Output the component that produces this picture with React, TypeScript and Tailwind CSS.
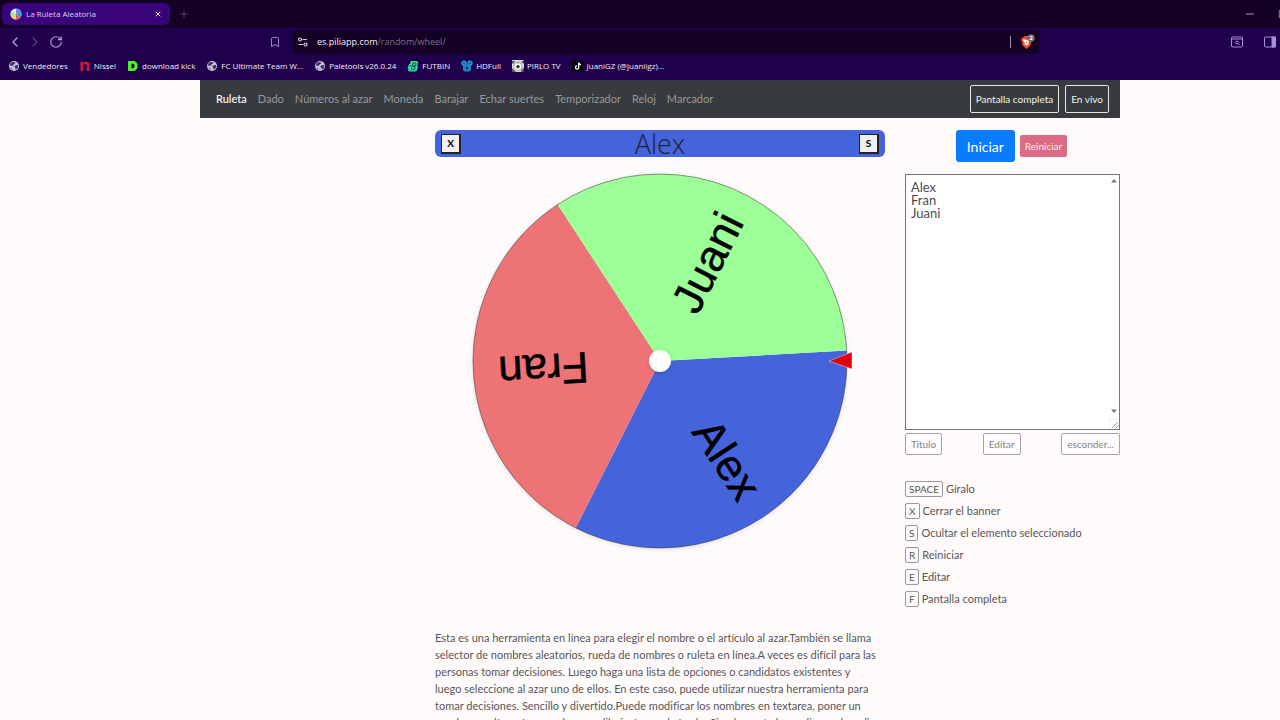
import { useState } from "react";
import { Bookmark, ChevronLeft, ChevronRight, Minus, Plus, RotateCw, Square, X } from "lucide-react";

const NAV = ["Ruleta", "Dado", "Números al azar", "Moneda", "Barajar", "Echar suertes", "Temporizador", "Reloj", "Marcador"];

const SHORTCUTS = [
  ["SPACE", "Gíralo"],
  ["X", "Cerrar el banner"],
  ["S", "Ocultar el elemento seleccionado"],
  ["R", "Reiniciar"],
  ["E", "Editar"],
  ["F", "Pantalla completa"],
];

const COLORS = ["#4564dc", "#ee7376", "#9dff98"];
const START_ANGLE = -3.2;
const RADIUS = 187;

function GlobeIcon() {
  return (
    <svg viewBox="0 0 12 12" className="size-3 shrink-0">
      <circle cx="6" cy="6" r="5" fill="#c9bfdc" />
      <path d="M3 2.6 6.6 2l.6 1.5-1.6.7-.4 1.3-1.9.2-1.6-.5M7.2 5.4l2.7-.3.5 1.4-1.5 2.4-1.3.4-.3-1.7-1.2-.8zM2.4 7.6l1.8.6.3 1.8" fill="#3c2a60" />
    </svg>
  );
}

function NisseiIcon() {
  return (
    <svg viewBox="0 0 12 12" className="size-3 shrink-0">
      <path d="M1.5 11V2h2l.6.8C5 2 6 1.8 7.2 1.8 9.5 1.8 10.5 3 10.5 5v6H7.8V5.5c0-1-.5-1.5-1.7-1.5s-1.9.6-1.9 1.6V11z" fill="#d3173f" />
    </svg>
  );
}

function KickIcon() {
  return (
    <svg viewBox="0 0 12 12" className="size-3 shrink-0">
      <path d="M1 1h6.5l2 1.500L10.500 4.500v3.200L9 10l-1.500 1H1z" fill="#4df02a" />
      <path d="M4.500 3.800h1.700l1.200 1v2.500l-1.200 1H4.500z" fill="#1d0047" />
    </svg>
  );
}

function FutbinIcon() {
  return (
    <svg viewBox="0 0 12 12" className="size-3 shrink-0" fill="none">
      <path d="M3.800 1h6l1.500 1.500-1 3 .6 1.500-1 3.500L8.500 11.500H2L1 10.500l.6-2H.5L2 4h1z" fill="#35d8a0" />
      <path d="M4.300 10.200 6 3h3.200l-.6 2.500H6.500M6 6.500h2.300L7.500 9.500H5.500M2.500 5.800h2" stroke="#14463f" strokeWidth=".8" />
    </svg>
  );
}

function HdFullIcon() {
  return (
    <svg viewBox="0 0 12 12" className="size-3 shrink-0">
      <circle cx="3" cy="3.200" r="2.700" fill="#2495d6" />
      <circle cx="9" cy="3.200" r="2.700" fill="#2495d6" />
      <rect x="2" y="4.500" width="8" height="7" rx="2" fill="#1f80c4" />
      <circle cx="3" cy="3.200" r=".8" fill="#10245c" />
      <circle cx="9" cy="3.200" r=".8" fill="#10245c" />
      <path d="m5 6.800 2.500 1.300L5 9.400z" fill="#10245c" />
    </svg>
  );
}

function PirloIcon() {
  return (
    <svg viewBox="0 0 12 12" className="size-3 shrink-0">
      <rect width="12" height="12" fill="#d9d6da" />
      <path d="M0 1h3L1.500 4 0 3zM12 0v4L9 2zM0 8l2 2 2 2H0zM10 9l2-1v4H9z" fill="#555" />
      <circle cx="6" cy="6.500" r="4" fill="#fff" stroke="#777" strokeWidth=".6" />
      <path d="m6 4.700 1.900 1.400-.8 2.200H4.900l-.8-2.200zM5 2.600h2L6 3.500z" fill="#333" />
    </svg>
  );
}

function TikTokIcon() {
  return (
    <svg viewBox="0 0 12 12" className="size-3 shrink-0">
      <rect width="12" height="12" rx="2" fill="#08030d" />
      <path d="M6.700 2.500v5a1.600 1.600 0 1 1-1.600-1.600M6.700 2.700c.2 1.200 1 1.800 2.200 1.900" fill="none" stroke="#fff" strokeWidth="1.300" />
    </svg>
  );
}

const BOOKMARKS = [
  { label: "Vendedores", Icon: GlobeIcon },
  { label: "Nissei", Icon: NisseiIcon },
  { label: "download kick", Icon: KickIcon },
  { label: "FC Ultimate Team W...", Icon: GlobeIcon },
  { label: "Paletools v26.0.24", Icon: GlobeIcon },
  { label: "FUTBIN", Icon: FutbinIcon },
  { label: "HDFull", Icon: HdFullIcon },
  { label: "PIRLO TV", Icon: PirloIcon },
  { label: "JuaniGZ (@juaniigz)...", Icon: TikTokIcon },
];

function WheelFavicon() {
  return (
    <svg viewBox="0 0 12 12" className="size-3 shrink-0">
      <circle cx="6" cy="6" r="5.500" fill="#e8e4ee" />
      <path d="M6 6V.5A5.500 5.500 0 0 1 11 3.800z" fill="#6f86e8" />
      <path d="M6 6l5-2.200A5.500 5.500 0 0 1 9.800 10z" fill="#3f9ad8" />
      <path d="M6 6l3.800 4A5.500 5.500 0 0 1 5.500 11.500z" fill="#e05a5a" />
      <path d="M6 6l-.5 5.500A5.500 5.500 0 0 1 1.200 8.800z" fill="#f2d25c" />
      <path d="M6 6L1.200 8.800A5.500 5.500 0 0 1 1.500 3z" fill="#9be89a" />
    </svg>
  );
}

function BraveIcon() {
  return (
    <svg viewBox="0 0 16 16" className="h-4 w-4" aria-hidden="true">
      <path d="M4 3.500 5.500 2h4L11 3.500l1.500.5.3 1.500-1.300 6L7.500 15l-4-3.500-1.300-6L2.500 4z" fill="#ee4a25" />
      <path d="m4.500 5 1.800.7h2.400L10.500 5l.5 1.500-1.800 2.300.3 1.400-2 1.500-2-1.500.3-1.400L4 6.500z" fill="#fff" />
      <path d="M6.500 7.500h2l-1 2z" fill="#ee4a25" />
      <circle cx="12" cy="4" r="3.800" fill="#6d6a76" />
      <text x="12" y="6" textAnchor="middle" fontSize="6" fontWeight="700" fill="#fff">2</text>
    </svg>
  );
}

function BrowserChrome() {
  return (
    <header className="shrink-0 bg-[#1f004b] font-['Open_Sans',sans-serif] text-[8px] leading-3 text-[#f1ecf8]">
      <div className="flex h-7 items-center bg-[#130024]">
        <div className="ml-[2px] flex h-[22px] w-[168px] items-center gap-1 rounded-md bg-[#39037a] px-2">
          <WheelFavicon />
          <span className="flex-1 text-[#dccdf2]">La Ruleta Aleatoria</span>
          <button aria-label="Cerrar pestaña"><X className="size-2" strokeWidth={3} /></button>
        </div>
        <button aria-label="Nueva pestaña" className="ml-2 text-[#54406a]"><Plus className="size-3" /></button>
        <button aria-label="Minimizar" className="mr-[22px] ml-auto text-[#a79bb8]"><Minus className="size-3" /></button>
        <button aria-label="Maximizar" className="-mr-2 text-[#a79bb8]"><Square className="size-2.5" /></button>
      </div>

      <div className="flex h-[26px] items-center border-t border-[#26005a]">
        <button aria-label="Atrás" className="ml-[7px] text-[#b79ddf]"><ChevronLeft className="size-4" strokeWidth={2} /></button>
        <button aria-label="Adelante" className="ml-1 text-[#5a3a8c]"><ChevronRight className="size-4" strokeWidth={2} /></button>
        <button aria-label="Recargar" className="ml-[6px] text-[#b79ddf]"><RotateCw className="size-3.5" strokeWidth={2} /></button>
        <button aria-label="Marcador" className="ml-[206px] text-[#a184d0]"><Bookmark className="size-3" strokeWidth={2} /></button>
        <div className="ml-3 flex h-6 w-[746px] items-center rounded bg-[#130024] pl-1">
          <svg viewBox="0 0 12 12" className="size-3 shrink-0" fill="none" stroke="#d6cbe6" strokeWidth="1.200">
            <circle cx="3" cy="3.500" r="1.500" />
            <path d="M5.500 3.500H10M1.500 8.500H6" />
            <circle cx="8.500" cy="8.500" r="1.500" />
          </svg>
          <span className="ml-2 flex-1 text-[9px] text-[#7d718c]">
            <span className="font-medium text-[#f4f0fa]">es.piliapp.com</span>/random/wheel/
          </span>
          <span className="mr-2 h-3 w-px bg-[#9c92aa]" />
          <button aria-label="Brave Shields" className="mr-1"><BraveIcon /></button>
        </div>
        <button aria-label="Buscar pestañas" className="ml-auto text-[#a98be0]">
          <svg viewBox="0 0 12 12" className="size-3" fill="none" stroke="currentColor" strokeWidth="1">
            <rect x=".5" y="1" width="11" height="10" rx="1" />
            <path d="M.5 3h11M7 7.500 8.500 9" />
            <circle cx="6" cy="6.500" r="1.400" />
          </svg>
        </button>
        <button aria-label="Barra lateral" className="mr-1 ml-[21px] text-[#a98be0]">
          <svg viewBox="0 0 12 12" className="size-3" fill="none" stroke="currentColor" strokeWidth="1">
            <rect x=".5" y="1" width="11" height="10" rx="1" />
            <path d="M8 1h3.500v10H8z" fill="currentColor" />
          </svg>
        </button>
      </div>

      <nav className="flex h-[26px] items-center gap-[11px] pb-[3px] pl-2 font-medium">
        {BOOKMARKS.map(({ label, Icon }) => (
          <a key={label} href="#" className="flex items-center gap-[3px] whitespace-nowrap">
            <Icon />
            {label}
          </a>
        ))}
      </nav>
    </header>
  );
}

function point(deg: number) {
  const rad = (deg * Math.PI) / 180;
  return `${(RADIUS * Math.cos(rad)).toFixed(2)} ${(RADIUS * Math.sin(rad)).toFixed(2)}`;
}

function Wheel({ names }: { names: string[] }) {
  const step = 360 / names.length;

  return (
    <svg viewBox="-225 -196 450 392" className="block w-full" role="img" aria-label="Ruleta">
      <circle r={RADIUS} fill="#fff" className="drop-shadow-sm" />
      {names.map((name, i) => {
        const from = START_ANGLE + i * step;
        const large = step > 180 ? 1 : 0;
        return (
          <path
            key={name}
            d={`M0 0L${point(from)}A${RADIUS} ${RADIUS} 0 ${large} 1 ${point(from + step)}Z`}
            fill={COLORS[i % COLORS.length]}
          />
        );
      })}
      <circle r={RADIUS} fill="none" stroke="#333" strokeWidth=".5" />
      {names.map((name, i) => (
        <text
          key={name}
          x="162"
          y="13"
          textAnchor="end"
          fontSize="44"
          stroke="#000"
          strokeWidth=".5"
          transform={`rotate(${START_ANGLE + (i + 0.5) * step})`}
          className="font-['Liberation_Sans',sans-serif]"
        >
          {name}
        </text>
      ))}
      <circle r="11" fill="#fff" className="drop-shadow-sm" />
      <path d="M169 0 192-9V8z" fill="#e3000b" stroke="#fff" strokeWidth=".4" />
    </svg>
  );
}

const smallButton = "h-[22px] rounded-[2px] border border-[#a3a3a5] px-[5px] text-[10px] text-[#858588]";
const bannerButton = "h-5 w-5 border border-[#222] border-r-2 border-b-2 bg-[#f0f0f0] text-[10px] leading-4 font-bold text-black";

export default function App() {
  const [text, setText] = useState("Alex\nFran\nJuani");
  const [banner, setBanner] = useState(true);
  const names = text.split("\n").filter((n) => n.trim());

  return (
    <div className="flex h-screen flex-col overflow-hidden bg-[#fffbfa] font-[Lato,sans-serif] text-[#56565a] [font-variant-ligatures:none]">
      <BrowserChrome />

      <div className="min-h-0 flex-1 overflow-hidden pl-10">
        <div className="mx-auto max-w-[920px]">
          <nav className="flex h-[38px] items-center gap-[11px] bg-[#373b3f] pr-[11px] pl-4 text-[11px] whitespace-nowrap text-[#97999c]">
            {NAV.map((item, i) => (
              <a key={item} href="#" className={i === 0 ? "font-medium text-white" : ""}>{item}</a>
            ))}
            <div className="ml-auto flex gap-[6px] text-[10px] text-[#f3f4e9]">
              <button className="h-7 rounded-[2px] border border-[#e6e8dc] px-[5px]">Pantalla completa</button>
              <button className="h-7 rounded-[2px] border border-[#e6e8dc] px-[5px]">En vivo</button>
            </div>
          </nav>

          <div className="flex justify-end gap-5 pt-3">
            <main className="w-[450px]">
              <div className="h-[27px]">
                {banner && (
                  <div className="flex h-full items-center justify-between rounded-md bg-[#4564dc] px-[6px]">
                    <button className={bannerButton} onClick={() => setBanner(false)}>X</button>
                    <span className="font-['Open_Sans',sans-serif] text-[27px] leading-7 font-light text-[#1d2233]">Alex</span>
                    <button className={bannerButton}>S</button>
                  </div>
                )}
              </div>
              <div className="pt-2">
                <Wheel names={names} />
              </div>
              <p className="mt-[72px] text-[11px] leading-[17px] whitespace-nowrap">
                Esta es una herramienta en línea para elegir el nombre o el artículo al azar.También se llama
                <br />
                selector de nombres aleatorios, rueda de nombres o ruleta en línea.A veces es difícil para las
                <br />
                personas tomar decisiones. Luego haga una lista de opciones o candidatos existentes y
                <br />
                luego seleccione al azar uno de ellos. En este caso, puede utilizar nuestra herramienta para
                <br />
                tomar decisiones. Sencillo y divertido.Puede modificar los nombres en textarea, poner un
                <br />
                nombre por línea. Los nombres se dibujarán en el círculo. Simplemente haga clic en el medio
              </p>
            </main>

            <aside className="w-[215px]">
              <div className="flex items-center justify-center gap-[5px] pr-0.5">
                <button className="h-8 rounded-[3px] bg-[#0a7cff] px-[11px] text-[14px] text-white">Iniciar</button>
                <button className="h-[22px] rounded-[2px] bg-[#dd6b84] px-[5px] text-[10px] text-[#fbe9ec]">Reiniciar</button>
              </div>

              <div className="relative mt-3">
                <textarea
                  aria-label="Nombres"
                  value={text}
                  onChange={(e) => setText(e.target.value)}
                  className="block h-[256px] w-full resize-none overflow-hidden border border-[#777] bg-white px-[5px] py-[6px] text-[13px] leading-[13px] text-[#4c4c50]"
                />
                <svg viewBox="0 0 8 5" className="absolute top-1 right-[2px] h-[5px] w-2" fill="#77777a"><path d="M1 4.500h6L4 1z" /></svg>
                <svg viewBox="0 0 8 5" className="absolute right-[2px] bottom-4 h-[5px] w-2" fill="#77777a"><path d="M1 .5h6L4 4z" /></svg>
                <svg viewBox="0 0 10 10" className="absolute right-px bottom-px size-[10px]" fill="none" stroke="#88888b">
                  <path d="M0 10V0h10" stroke="#e4e4e4" />
                  <path d="m3 9 6-6M6.500 9.500l3-3" strokeWidth=".8" />
                </svg>
              </div>

              <div className="flex justify-between pt-[3px]">
                <button className={smallButton}>Título</button>
                <button className={smallButton}>Editar</button>
                <button className={smallButton}>esconder...</button>
              </div>

              <ul className="mt-[23px] text-[11px]">
                {SHORTCUTS.map(([key, label]) => (
                  <li key={key} className="flex h-[22px] items-center gap-[3px]">
                    <kbd className="flex h-4 items-center rounded-[2px] border border-[#9a9a9c] px-[3px] font-[Lato,sans-serif] text-[10px]">{key}</kbd>
                    {label}
                  </li>
                ))}
              </ul>
            </aside>
          </div>
        </div>
      </div>
    </div>
  );
}
